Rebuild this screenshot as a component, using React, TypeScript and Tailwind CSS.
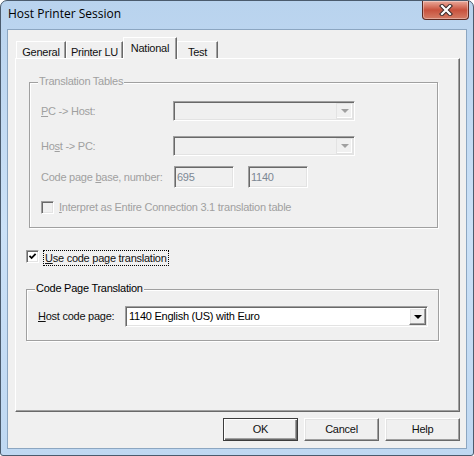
import React from "react";

const sunken =
  "border border-t-[#a0a0a0] border-l-[#a0a0a0] border-r-white border-b-white shadow-[inset_1px_1px_0_#696969,inset_-1px_-1px_0_#e3e3e3]";
const raised =
  "border border-t-white border-l-white border-r-[#696969] border-b-[#696969] shadow-[inset_-1px_-1px_0_#a0a0a0,inset_1px_1px_0_#e3e3e3]";
const etched = "border border-[#a0a0a0] shadow-[inset_1px_1px_0_#fff,1px_1px_0_#fff]";

function Arrow({ disabled }: { disabled?: boolean }) {
  return (
    <div
      className={`h-0 w-0 border-x-[4px] border-t-[4px] border-x-transparent ${
        disabled ? "border-t-[#a0a0a0]" : "border-t-black"
      }`}
    />
  );
}

function Combo({ value, disabled, className }: { value?: string; disabled?: boolean; className: string }) {
  return (
    <div className={`${sunken} ${disabled ? "bg-[#f0f0f0]" : "bg-white"} flex p-[1px] ${className}`}>
      <div className="flex flex-1 items-center px-[2px] text-black">{value}</div>
      <div
        className={`flex w-[17px] items-center justify-center bg-[#f0f0f0] ${
          disabled
            ? "border border-[#e3e3e3] shadow-[inset_-1px_-1px_0_#fff]"
            : raised
        }`}
      >
        <Arrow disabled={disabled} />
      </div>
    </div>
  );
}

function CheckBox({ checked, disabled }: { checked?: boolean; disabled?: boolean }) {
  return (
    <div
      className={`${sunken} flex h-[13px] w-[13px] shrink-0 items-center justify-center ${
        disabled ? "bg-[#f0f0f0]" : "bg-white"
      }`}
    >
      {checked && (
        <svg width="9" height="9" viewBox="0 0 9 9">
          <polyline points="1.5,3.8 3.6,6 7.6,1.8" fill="none" stroke="#000" strokeWidth="1.8" />
        </svg>
      )}
    </div>
  );
}

function GroupBox({
  title,
  disabled,
  className,
  children,
}: {
  title: string;
  disabled?: boolean;
  className: string;
  children: React.ReactNode;
}) {
  return (
    <div className={`relative ${etched} ${className}`}>
      <span
        className={`absolute -top-[8px] left-[8px] bg-[#f0f0f0] px-[1px] leading-[13px] ${
          disabled ? "text-[#a0a0a0]" : "text-black"
        }`}
      >
        {title}
      </span>
      {children}
    </div>
  );
}

function Tab({ label, selected, w }: { label: string; selected?: boolean; w: string }) {
  if (selected)
    return (
      <div
        className={`relative z-10 -mb-px flex h-[22px] ${w} justify-center border-l border-t border-r border-l-white border-t-white border-r-[#696969] bg-[#f0f0f0] pt-[2px] shadow-[inset_-1px_0_0_#a0a0a0]`}
      >
        {label}
      </div>
    );
  return (
    <div
      className={`flex h-[17px] ${w} justify-center border-l border-t border-r border-l-white border-t-white border-r-[#696969] pt-[2px] shadow-[inset_-1px_0_0_#a0a0a0]`}
    >
      {label}
    </div>
  );
}

function Button({ label, isDefault }: { label: string; isDefault?: boolean }) {
  return (
    <div
      className={`flex h-[23px] w-[75px] items-center justify-center bg-[#f0f0f0] ${
        isDefault
          ? "border border-[#3c3c3c] shadow-[inset_1px_1px_0_#fff,inset_-1px_-1px_0_#696969,inset_-2px_-2px_0_#a0a0a0]"
          : raised
      }`}
    >
      {label}
    </div>
  );
}

export default function App() {
  return (
    <div className="h-[456px] w-[474px] bg-white font-['Liberation_Sans',Arial,sans-serif] text-[11px] tracking-[-0.25px] text-[#111]">
      <div className="flex h-full w-full flex-col rounded-t-[7px] rounded-b-[3px] border border-[#4b5b6d] bg-[#bcd6f1] bg-gradient-to-b from-[#b9d3ee] via-[#cbe1f7] to-[#bfd8f2] px-[6px] pb-[6px]">
        {/* title bar */}
        <div className="-mx-[6px] flex h-[28px] shrink-0 items-start justify-between">
          <span className="pl-[7px] pt-[5px] font-['Open_Sans',sans-serif] text-[12px] leading-[16px] tracking-normal text-black">
            Host Printer Session
          </span>
          <div className="mr-[4px] flex h-[19px] w-[47px] items-center justify-center rounded-b-[4px] border border-t-0 border-[#5c2a22] bg-gradient-to-b from-[#e9a99b] via-[#c8513d] to-[#d47c66] shadow-[inset_0_0_0_1px_rgba(255,255,255,0.35)]">
            <svg width="14" height="12" viewBox="0 0 14 12">
              <path d="M3 2 L11 10 M11 2 L3 10" stroke="#3a2a2a" strokeWidth="4.2" strokeLinecap="square" />
              <path d="M3 2 L11 10 M11 2 L3 10" stroke="#fff" strokeWidth="2.2" strokeLinecap="square" />
            </svg>
          </div>
        </div>

        {/* client */}
        <div className="flex flex-1 flex-col border border-[#8ca6c1] bg-[#f0f0f0] pl-[7px] pt-[7px]">
          <div className="ml-[1px] flex h-[21px] items-end">
            <Tab label="General" w="w-[50px]" />
            <Tab label="Printer LU" w="w-[57px]" />
            <Tab label="National" w="w-[54px]" selected />
            <Tab label="Test" w="w-[41px]" />
          </div>

          <div className="flex h-[354px] w-[445px] flex-col border border-b-[#696969] border-l-white border-r-[#696969] border-t-white shadow-[inset_-1px_-1px_0_#a0a0a0]">
            <GroupBox title="Translation Tables" disabled className="ml-[13px] mt-[23px] h-[146px] w-[409px]">
              <div className="flex flex-col pl-[11px] pt-[18px] text-[#a0a0a0]">
                <div className="flex items-center">
                  <span className="w-[132px]">
                    <u>P</u>C -&gt; Host:
                  </span>
                  <Combo disabled className="h-[20px] w-[182px]" />
                </div>
                <div className="mt-[15px] flex items-center">
                  <span className="w-[132px]">
                    Ho<u>s</u>t -&gt; PC:
                  </span>
                  <Combo disabled className="h-[20px] w-[182px]" />
                </div>
                <div className="mt-[10px] flex items-center">
                  <span className="w-[133px]">
                    Code page <u>b</u>ase, number:
                  </span>
                  <div className={`${sunken} flex h-[22px] w-[60px] items-center pl-[2px] text-[#7d8894]`}>695</div>
                  <div className={`${sunken} ml-[14px] flex h-[22px] w-[60px] items-center pl-[2px] text-[#7d8894]`}>
                    1140
                  </div>
                </div>
                <div className="mt-[11px] flex items-center">
                  <CheckBox disabled />
                  <span className="ml-[5px]">
                    <u>I</u>nterpret as Entire Connection 3.1 translation table
                  </span>
                </div>
              </div>
            </GroupBox>

            <div className="ml-[10px] mt-[22px] flex h-[16px] items-start">
              <CheckBox checked />
              <span className="ml-[4px] border border-dotted border-black px-[1px] leading-[14px]">
                <u>U</u>se code page translation
              </span>
            </div>

            <GroupBox title="Code Page Translation" className="ml-[10px] mt-[23px] h-[52px] w-[413px]">
              <div className="flex items-center pl-[11px] pt-[16px]">
                <span className="w-[87px]">
                  <u>H</u>ost code page:
                </span>
                <Combo value="1140 English (US) with Euro" className="h-[21px] w-[303px]" />
              </div>
            </GroupBox>
          </div>

          <div className="mt-[6px] flex w-[445px] justify-end gap-[6px]">
            <Button label="OK" isDefault />
            <Button label="Cancel" />
            <Button label="Help" />
          </div>
        </div>
      </div>
    </div>
  );
}
